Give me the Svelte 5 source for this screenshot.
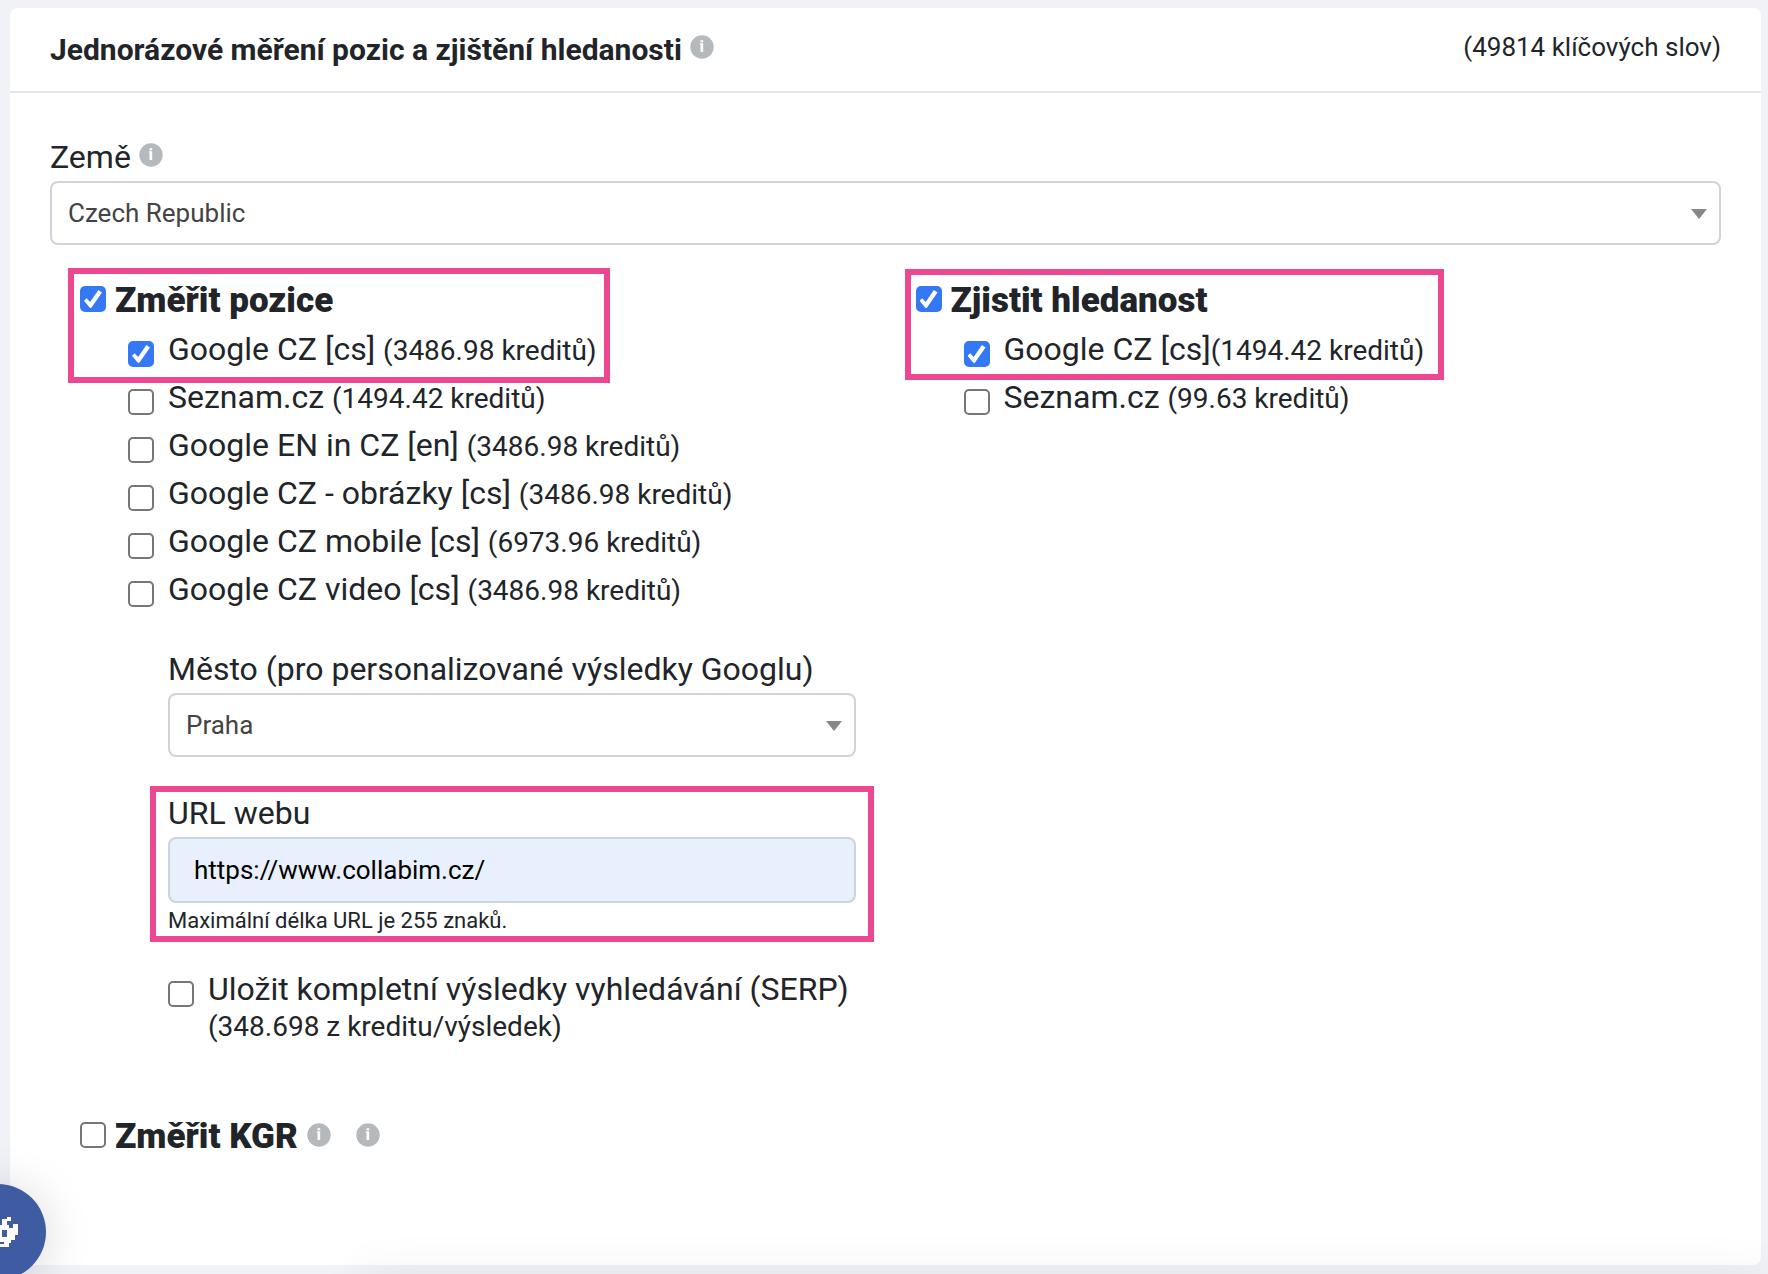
<script lang="ts">
	interface Engine {
		id: string;
		name: string;
		credits: string;
		checked: boolean;
	}

	let country = $state('Czech Republic');
	let city = $state('Praha');
	let url = $state('https://www.collabim.cz/');
	let measurePositions = $state(true);
	let findVolume = $state(true);
	let saveSerp = $state(false);
	let measureKgr = $state(false);

	let positionEngines: Engine[] = $state([
		{ id: 'pos-google-cs', name: 'Google CZ [cs] ', credits: '3486.98', checked: true },
		{ id: 'pos-seznam', name: 'Seznam.cz ', credits: '1494.42', checked: false },
		{ id: 'pos-google-en', name: 'Google EN in CZ [en] ', credits: '3486.98', checked: false },
		{ id: 'pos-images', name: 'Google CZ - obrázky [cs] ', credits: '3486.98', checked: false },
		{ id: 'pos-mobile', name: 'Google CZ mobile [cs] ', credits: '6973.96', checked: false },
		{ id: 'pos-video', name: 'Google CZ video [cs] ', credits: '3486.98', checked: false }
	]);

	let volumeEngines: Engine[] = $state([
		{ id: 'vol-google-cs', name: 'Google CZ [cs]', credits: '1494.42', checked: true },
		{ id: 'vol-seznam', name: 'Seznam.cz ', credits: '99.63', checked: false }
	]);
</script>

{#snippet info()}
	<svg class="info" viewBox="0 0 24 24" aria-hidden="true">
		<circle cx="12" cy="12" r="11.7" fill="#b5b9bc" />
		<path d="M10.5 5.3h2.7v1.9h-2.7zM9.8 8.2h3.4v8.9h-2.7V9.4h-.7z" fill="#fff" />
	</svg>
{/snippet}

{#snippet engineRow(engine: Engine)}
	<div class="engine">
		<input type="checkbox" id={engine.id} bind:checked={engine.checked} />
		<label for={engine.id}>{engine.name}<small>({engine.credits} kreditů)</small></label>
	</div>
{/snippet}

<main class="card">
	<header class="card-header">
		<h1>Jednorázové měření pozic a zjištění hledanosti</h1>
		{@render info()}
		<span class="count">(49814 klíčových slov)</span>
	</header>

	<form class="card-body">
		<div class="field-label">
			<label for="country">Země</label>
			{@render info()}
		</div>
		<div class="select-box">
			<select id="country" bind:value={country}>
				<option>Czech Republic</option>
			</select>
		</div>

		<div class="columns">
			<section class="column">
				<div class="highlight">
					<div class="heading">
						<input type="checkbox" id="positions" bind:checked={measurePositions} />
						<label for="positions">Změřit pozice</label>
					</div>
					{@render engineRow(positionEngines[0])}
				</div>
				{#each positionEngines.slice(1) as engine (engine.id)}
					{@render engineRow(engine)}
				{/each}

				<div class="details">
					<div class="field-label">
						<label for="city">Město (pro personalizované výsledky Googlu)</label>
					</div>
					<div class="select-box">
						<select id="city" bind:value={city}>
							<option>Praha</option>
						</select>
					</div>

					<div class="highlight url">
						<div class="field-label">
							<label for="url">URL webu</label>
						</div>
						<input type="text" id="url" maxlength="255" bind:value={url} />
						<p class="help">Maximální délka URL je 255 znaků.</p>
					</div>

					<div class="serp">
						<input type="checkbox" id="serp" bind:checked={saveSerp} />
						<label for="serp">
							Uložit kompletní výsledky vyhledávání (SERP)
							<small>(348.698 z kreditu/výsledek)</small>
						</label>
					</div>
				</div>

				<div class="heading kgr">
					<input type="checkbox" id="kgr" bind:checked={measureKgr} />
					<label for="kgr">Změřit KGR</label>
					{@render info()}
					{@render info()}
				</div>
			</section>

			<section class="column">
				<div class="highlight volume">
					<div class="heading">
						<input type="checkbox" id="volume" bind:checked={findVolume} />
						<label for="volume">Zjistit hledanost</label>
					</div>
					{@render engineRow(volumeEngines[0])}
				</div>
				{#each volumeEngines.slice(1) as engine (engine.id)}
					{@render engineRow(engine)}
				{/each}
			</section>
		</div>
	</form>
</main>

<button class="bubble" type="button" aria-label="Chat">
	<svg viewBox="0 0 40 32" aria-hidden="true">
		<path
			fill="#fff"
			fill-rule="evenodd"
			d="M29 1h4v4h-4v4h2v3h4V8h5v11h-3v5h-4v3h-2v4H9v-4H7v-3H3v-5H0V8h5v4h4V9h2V5H7V1h4v2h5v6h8V3h5zM24 14v7h5v-7zM11 14v7h5v-7zM14 26v2h12v-2z"
		/>
	</svg>
</button>

<style>
	:global(body) {
		margin: 0;
		background: #f1f2f7;
		color: #212529;
		font-family: Roboto, 'Liberation Sans', sans-serif;
		font-size: 32px;
		line-height: 48px;
	}

	/* soft shade rising from the bottom edge of the window */
	:global(body)::after {
		content: '';
		position: fixed;
		right: 0;
		bottom: -40px;
		left: 360px;
		height: 40px;
		box-shadow: 0 0 48px rgba(0, 0, 0, 0.07);
		pointer-events: none;
	}

	.card {
		margin: 8px 7px 9px 10px;
		background: #fff;
		border-radius: 8px;
	}

	.card-header {
		display: flex;
		align-items: center;
		gap: 8px;
		padding: 16px 40px;
		height: 51px;
		border-bottom: 2px solid #e3e5e7;
	}

	h1 {
		margin: 0;
		font-size: 30px;
		font-weight: 700;
	}

	.info {
		flex: none;
		width: 24px;
		height: 24px;
	}

	.count {
		margin-left: auto;
		font-size: 26px;
	}

	.card-header .info,
	.count {
		margin-bottom: 6px;
	}

	.card-body {
		padding: 40px 40px 104px;
	}

	.field-label {
		display: flex;
		align-items: center;
		gap: 8px;
	}

	.field-label .info {
		margin-bottom: 4px;
	}

	.select-box {
		position: relative;
	}

	.select-box::after {
		content: '';
		position: absolute;
		top: 28px;
		right: 14px;
		border: 8px solid transparent;
		border-top: 10px solid #888;
		border-bottom: 0;
		pointer-events: none;
	}

	select,
	input[type='text'] {
		appearance: none;
		display: block;
		box-sizing: border-box;
		width: 100%;
		border: 2px solid #ced4da;
		border-radius: 8px;
		font-family: inherit;
		font-size: 26px;
	}

	select {
		height: 64px;
		padding: 0 40px 0 16px;
		background: #fff;
		color: #444;
	}

	input[type='text'] {
		height: 66px;
		padding: 0 24px;
		background: #e8f0fe;
		color: #000;
	}

	input[type='checkbox'] {
		appearance: none;
		flex: none;
		position: relative;
		box-sizing: border-box;
		width: 26px;
		height: 26px;
		margin: 0;
		border: 2px solid #767676;
		border-radius: 5px;
		background: #fff;
	}

	input[type='checkbox']:checked {
		border-color: #3478f6;
		background: #3478f6;
	}

	input[type='checkbox']:checked::before {
		content: '';
		position: absolute;
		inset: 2px;
		background: #fff;
		clip-path: polygon(0 60%, 15% 46%, 34% 67%, 80% 0, 100% 14%, 37% 104%);
	}

	.columns {
		display: grid;
		grid-template-columns: 1fr 1fr;
		padding-top: 30px;
	}

	.column {
		padding: 0 30px;
	}

	.highlight {
		position: relative;
		width: fit-content;
	}

	.highlight::after {
		content: '';
		position: absolute;
		inset: -7px -13px -10px -12px;
		border: 6px solid #ec4891;
		pointer-events: none;
	}

	.highlight.volume::after {
		inset: -6px -20px -7px -11px;
	}

	.heading {
		display: flex;
		align-items: center;
		gap: 9px;
		height: 48px;
		margin-bottom: 2px;
		font-size: 35px;
		font-weight: 900;
	}

	.heading label {
		padding-top: 4px;
	}

	.engine {
		display: flex;
		align-items: center;
		gap: 14px;
		padding-left: 48px;
	}

	.engine input {
		margin-top: 10px;
	}

	small {
		font-size: 28px;
		line-height: 28px;
	}

	.details {
		padding: 32px 0 0 88px;
	}

	.highlight.url {
		width: auto;
		margin-top: 32px;
	}

	.highlight.url::after {
		inset: -3px -18px -3px -18px;
	}

	.help {
		margin: 0;
		font-size: 22px;
		line-height: 36px;
	}

	.serp {
		display: flex;
		gap: 14px;
		padding-top: 26px;
	}

	.serp input {
		margin-top: 16px;
	}

	.serp small {
		display: block;
	}

	.heading.kgr {
		padding-top: 70px;
	}

	.kgr .info + .info {
		margin-left: 16px;
	}

	.bubble {
		position: fixed;
		left: -50px;
		bottom: -6px;
		display: grid;
		place-items: center;
		width: 96px;
		height: 96px;
		padding: 0;
		border: 0;
		border-radius: 50%;
		background: #3f5ca3;
		box-shadow: 0 4px 48px rgba(0, 0, 0, 0.16);
	}

	.bubble svg {
		width: 40px;
		height: 32px;
	}
</style>
